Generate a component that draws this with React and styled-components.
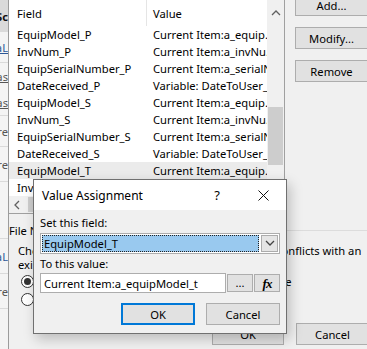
import React from "react";
import styled, { createGlobalStyle } from "styled-components";

const GlobalStyle = createGlobalStyle`
  html, body {
    margin: 0;
    padding: 0;
    background: #f0f0f0;
  }
`;

const UI_FONT = `"Noto Sans", "Open Sans", Arial, sans-serif`;

const Screen = styled.div`
  width: 367px;
  height: 349px;
  position: relative;
  overflow: hidden;
  display: flex;
  background: #f0f0f0;
  font-family: ${UI_FONT};
  font-size: 11.2px;
  color: #000;
`;

/* sliver of the window lying behind, on the far left */
const BehindStrip = styled.div`
  width: 8px;
  flex: none;
  display: flex;
  flex-direction: column;
  background: #f4f4f4;
  border-right: 1px solid #9c9c9c;
`;

const StripCell = styled.div`
  height: ${(p) => p.$h}px;
  flex: none;
  display: flex;
  align-items: center;
  justify-content: flex-end;
  overflow: hidden;
  white-space: nowrap;
  background: ${(p) => p.$bg || "transparent"};
  border-bottom: ${(p) => (p.$line ? "1px solid #dadada" : "none")};
  color: ${(p) => p.$color || "#555"};
  font-weight: ${(p) => (p.$bold ? 700 : 400)};
  text-decoration: ${(p) => (p.$under ? "underline" : "none")};
`;

const MainWindow = styled.div`
  flex: 1;
  min-width: 0;
  display: flex;
  flex-direction: column;
`;

const TopRow = styled.div`
  display: flex;
  height: 214px;
  flex: none;
`;

const ListBox = styled.div`
  width: 275px;
  flex: none;
  display: grid;
  grid-template-columns: 1fr 17px;
  grid-template-rows: 1fr 17px;
  background: #fff;
  border-right: 1px solid #a0a0a0;
  border-bottom: 1px solid #a0a0a0;
`;

const ListBody = styled.div`
  display: flex;
  flex-direction: column;
  overflow: hidden;
`;

const HeaderRow = styled.div`
  height: 26px;
  flex: none;
  display: flex;
`;

const HeaderCell = styled.div`
  display: flex;
  align-items: center;
  width: ${(p) => (p.$first ? "138px" : "auto")};
  flex: ${(p) => (p.$first ? "none" : "1")};
  padding-left: ${(p) => (p.$first ? "8px" : "6px")};
  box-sizing: border-box;
  border-right: ${(p) => (p.$first ? "1px solid #e5e5e5" : "none")};
`;

const Row = styled.div`
  height: 17px;
  flex: none;
  display: flex;
  align-items: center;
  background: ${(p) => (p.$selected ? "#ebebeb" : "transparent")};
`;

const Cell = styled.div`
  width: ${(p) => (p.$first ? "138px" : "auto")};
  flex: ${(p) => (p.$first ? "none" : "1")};
  min-width: 0;
  padding-left: ${(p) => (p.$first ? "8px" : "6px")};
  box-sizing: border-box;
  white-space: nowrap;
  overflow: hidden;
  line-height: 17px;
`;

const VScroll = styled.div`
  display: flex;
  flex-direction: column;
  align-items: center;
  background: #f0f0f0;
`;

const ScrollArrow = styled.div`
  height: ${(p) => p.$h}px;
  width: 17px;
  flex: none;
  display: flex;
  align-items: center;
  justify-content: center;
`;

const VThumb = styled.div`
  width: 15px;
  height: 58px;
  margin-top: 79px;
  background: #cdcdcd;
`;

const HScroll = styled.div`
  display: flex;
  align-items: center;
  background: #f0f0f0;
`;

const HThumb = styled.div`
  width: 140px;
  height: 15px;
  margin-left: 2px;
  background: #cdcdcd;
`;

const Corner = styled.div`
  background: #f0f0f0;
`;

const SideButtons = styled.div`
  display: flex;
  flex-direction: column;
  gap: 11px;
  margin-left: 10px;
  margin-top: -6px;
`;

const WinButton = styled.button`
  width: ${(p) => p.$w || 73}px;
  height: 22px;
  flex: none;
  box-sizing: border-box;
  padding: 0;
  background: #e1e1e1;
  border: ${(p) => (p.$default ? "2px solid #0078d7" : "1px solid #adadad")};
  font-family: ${UI_FONT};
  font-size: 11.2px;
  color: #000;
  display: flex;
  align-items: center;
  justify-content: center;
`;

const GroupBox = styled.div`
  margin-top: 9px;
  height: 86px;
  flex: none;
  display: flex;
  flex-direction: column;
`;

const GroupTitle = styled.div`
  height: 16px;
  display: flex;
  align-items: center;
  white-space: nowrap;

  &::after {
    content: "";
    flex: 1;
    height: 1px;
    margin-left: 6px;
    background: #dcdcdc;
  }
`;

const GroupText = styled.div`
  margin-top: 5px;
  padding-left: 9px;
  line-height: 14px;
  white-space: nowrap;
`;

const RadioRow = styled.label`
  height: 19px;
  display: flex;
  align-items: center;
  padding-left: 12px;
  white-space: nowrap;
`;

const RadioDot = styled.span`
  width: 13px;
  height: 13px;
  box-sizing: border-box;
  border-radius: 50%;
  border: 1px solid #333;
  background: #fff;
  margin-right: 4px;
  display: flex;
  align-items: center;
  justify-content: center;

  &::after {
    content: "";
    width: 7px;
    height: 7px;
    border-radius: 50%;
    background: ${(p) => (p.$checked ? "#333" : "transparent")};
  }
`;

const BottomButtons = styled.div`
  display: flex;
  gap: 12px;
  padding-left: 203px;
  margin-top: 14px;
`;

/* ---------- the modal dialog on top ---------- */

const Dialog = styled.div`
  position: absolute;
  left: 33px;
  top: 179px;
  width: 254px;
  height: 155px;
  box-sizing: border-box;
  border: 1px solid #707070;
  background: #f0f0f0;
  box-shadow: 3px 5px 12px rgba(0, 0, 0, 0.22);
  display: flex;
  flex-direction: column;
`;

const TitleBar = styled.div`
  height: 30px;
  flex: none;
  display: flex;
  align-items: center;
  background: #fff;
`;

const TitleText = styled.div`
  flex: 1;
  padding-left: 8px;
  font-size: 12px;
`;

const TitleButton = styled.div`
  width: 46px;
  height: 30px;
  display: flex;
  align-items: center;
  justify-content: center;
  font-size: 13px;
`;

const DialogBody = styled.div`
  flex: 1;
  display: flex;
  flex-direction: column;
  padding: 6px 6px 8px 6px;
`;

const FieldLabel = styled.div`
  line-height: 14px;
  margin-top: ${(p) => p.$mt || 0}px;
`;

const Combo = styled.div`
  margin-top: 3px;
  height: 21px;
  box-sizing: border-box;
  display: flex;
  padding: 1px;
  background: #fff;
  border: 1px solid #adadad;
`;

const ComboValue = styled.div`
  flex: 1;
  display: flex;
  align-items: center;
  padding-left: 2px;
  background: #99c9ef;
  outline: 1px dotted #222;
  outline-offset: -1px;
`;

const ComboButton = styled.div`
  width: 17px;
  margin-left: 2px;
  box-sizing: border-box;
  background: #e5e5e5;
  border: 1px solid #acacac;
  display: flex;
  align-items: center;
  justify-content: center;
`;

const InputRow = styled.div`
  margin-top: 2px;
  height: 20px;
  display: flex;
  align-items: center;
  gap: 1px;
`;

const TextBox = styled.div`
  flex: 1;
  height: 20px;
  box-sizing: border-box;
  display: flex;
  align-items: center;
  padding-left: 3px;
  background: #fff;
  border: 1px solid #adadad;
  white-space: nowrap;
  overflow: hidden;
`;

const SmallButton = styled.div`
  width: 26px;
  height: 18px;
  flex: none;
  box-sizing: border-box;
  background: #e1e1e1;
  border: 1px solid #adadad;
  display: flex;
  align-items: center;
  justify-content: center;
  line-height: 1;
`;

const FxText = styled.span`
  font-family: "Liberation Serif", "DejaVu Serif", serif;
  font-style: italic;
  font-weight: 700;
  font-size: 13px;
  letter-spacing: -1px;
`;

const DialogButtons = styled.div`
  margin-top: 10px;
  display: flex;
  justify-content: flex-end;
  gap: 11px;
`;

const rows = [
  ["EquipModel_P", "Current Item:a_equipModel_p"],
  ["InvNum_P", "Current Item:a_invNum_p"],
  ["EquipSerialNumber_P", "Current Item:a_serialNumber_p"],
  ["DateReceived_P", "Variable: DateToUser_P"],
  ["EquipModel_S", "Current Item:a_equipModel_s"],
  ["InvNum_S", "Current Item:a_invNum_s"],
  ["EquipSerialNumber_S", "Current Item:a_serialNumber_s"],
  ["DateReceived_S", "Variable: DateToUser_S"],
  ["EquipModel_T", "Current Item:a_equipModel_t"],
  ["InvNum_T", "Current Item:a_invNum_t"],
];

const shorten = (v) => {
  if (v.startsWith("Current Item:a_equip")) return "Current Item:a_equip..";
  if (v.startsWith("Current Item:a_invNu")) return "Current Item:a_invNu..";
  return v;
};

const Chevron = ({ dir }) => {
  const pts = {
    up: "1,6 5,2 9,6",
    left: "6,1 2,5 6,9",
    down: "1,2 5,6 9,2",
  }[dir];
  return (
    <svg width="10" height="10" viewBox="0 0 10 10">
      <polyline points={pts} fill="none" stroke={dir === "down" ? "#444" : "#606060"} strokeWidth="1.3" />
    </svg>
  );
};

const CloseIcon = () => (
  <svg width="11" height="11" viewBox="0 0 11 11">
    <path d="M0.5 0.5 L10.5 10.5 M10.5 0.5 L0.5 10.5" stroke="#111" strokeWidth="1" />
  </svg>
);

export default function App() {
  return (
    <>
      <GlobalStyle />
      <Screen>
        <BehindStrip>
          <StripCell $h={32} $bg="#dadada" $bold $color="#111">Sc</StripCell>
          <StripCell $h={30} $color="#2b5797" $under $line>aL</StripCell>
          <StripCell $h={26} $under>as</StripCell>
          <StripCell $h={26} $under $line>as</StripCell>
          <StripCell $h={30} $line>re</StripCell>
          <StripCell $h={34} $line>re</StripCell>
          <StripCell $h={56} $line></StripCell>
          <StripCell $h={34} $color="#2b5797" $line>aL</StripCell>
          <StripCell $h={34} $line>re</StripCell>
          <StripCell $h={47}></StripCell>
        </BehindStrip>

        <MainWindow>
          <TopRow>
            <ListBox>
              <ListBody>
                <HeaderRow>
                  <HeaderCell $first>Field</HeaderCell>
                  <HeaderCell>Value</HeaderCell>
                </HeaderRow>
                {rows.map(([field, value], i) => (
                  <Row key={field} $selected={i === 8}>
                    <Cell $first>{field}</Cell>
                    <Cell>{shorten(value)}</Cell>
                  </Row>
                ))}
              </ListBody>
              <VScroll>
                <ScrollArrow $h={28}>
                  <Chevron dir="up" />
                </ScrollArrow>
                <VThumb />
              </VScroll>
              <HScroll>
                <ScrollArrow $h={17}>
                  <Chevron dir="left" />
                </ScrollArrow>
                <HThumb />
              </HScroll>
              <Corner />
            </ListBox>

            <SideButtons>
              <WinButton>Add...</WinButton>
              <WinButton>Modify...</WinButton>
              <WinButton>Remove</WinButton>
            </SideButtons>
          </TopRow>

          <GroupBox>
            <GroupTitle>File Name Conflicts</GroupTitle>
            <GroupText>
              Choose what to do when the copied item's name conflicts with an
              <br />
              existing file:
            </GroupText>
            <RadioRow>
              <RadioDot $checked />
              Overwrite an existing file having the same name
            </RadioRow>
            <RadioRow>
              <RadioDot />
              Rename the new file
            </RadioRow>
          </GroupBox>

          <BottomButtons>
            <WinButton $w={72}>OK</WinButton>
            <WinButton $w={73}>Cancel</WinButton>
          </BottomButtons>
        </MainWindow>

        <Dialog>
          <TitleBar>
            <TitleText>Value Assignment</TitleText>
            <TitleButton>?</TitleButton>
            <TitleButton>
              <CloseIcon />
            </TitleButton>
          </TitleBar>
          <DialogBody>
            <FieldLabel>Set this field:</FieldLabel>
            <Combo>
              <ComboValue>EquipModel_T</ComboValue>
              <ComboButton>
                <Chevron dir="down" />
              </ComboButton>
            </Combo>
            <FieldLabel $mt={3}>To this value:</FieldLabel>
            <InputRow>
              <TextBox>Current Item:a_equipModel_t</TextBox>
              <SmallButton>...</SmallButton>
              <SmallButton>
                <FxText>fx</FxText>
              </SmallButton>
            </InputRow>
            <DialogButtons>
              <WinButton $w={74} $default>OK</WinButton>
              <WinButton $w={74}>Cancel</WinButton>
            </DialogButtons>
          </DialogBody>
        </Dialog>
      </Screen>
    </>
  );
}
